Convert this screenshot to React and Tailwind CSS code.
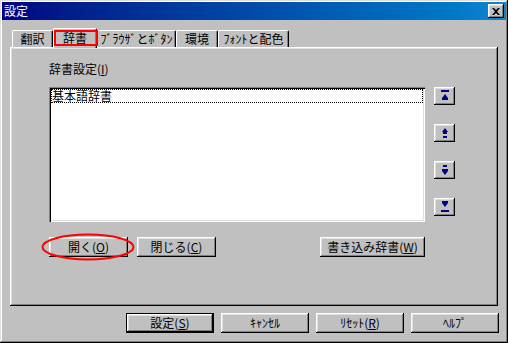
import React from 'react';

const raised =
  'shadow-[inset_-1px_-1px_0_#000,inset_1px_1px_0_#fff,inset_-2px_-2px_0_#808080,inset_2px_2px_0_#dfdfdf]';
const sunken =
  'shadow-[inset_1px_1px_0_#808080,inset_2px_2px_0_#000,inset_-1px_-1px_0_#fff,inset_-2px_-2px_0_#dfdfdf]';
const font = "font-['Noto_Sans_CJK_JP',sans-serif]";

function Btn({ children, className = '' }) {
  return (
    <div
      className={`h-[20px] flex items-center justify-center bg-[#c0c0c0] text-[12px] leading-[14px] text-black ${raised} ${className}`}
    >
      {children}
    </div>
  );
}

function Tab({ label, w, active }) {
  if (active) {
    return (
      <div
        className={`relative z-10 -mb-px h-[20px] flex items-start justify-center pt-[2px] bg-[#c0c0c0] border-t border-l border-white border-r border-r-black rounded-t-[2px] shadow-[inset_-1px_0_0_#808080] ${w}`}
      >
        <span className="text-[12px] leading-[14px]">{label}</span>
        <div className="absolute left-0 top-[1px] w-[44px] h-[16px] border-2 border-[#ff0000]" />
      </div>
    );
  }
  return (
    <div
      className={`h-[17px] flex items-start justify-center pt-[1px] border-t border-l border-white border-r border-r-black rounded-t-[2px] shadow-[inset_-1px_0_0_#808080] ${w}`}
    >
      <span className="text-[12px] leading-[14px]">{label}</span>
    </div>
  );
}

function ArrowIcon({ kind }) {
  const c = '#000080';
  return (
    <svg width="10" height="12" viewBox="0 0 10 12">
      {kind === 'top' && (
        <>
          <rect x="1" y="0" width="8" height="2" fill={c} />
          <path d="M5 4 L8 8 L2 8 Z" fill={c} />
          <rect x="2" y="8" width="6" height="2" fill={c} />
        </>
      )}
      {kind === 'up' && (
        <>
          <path d="M5 1 L8 5 L2 5 Z" fill={c} />
          <rect x="3" y="5" width="4" height="2" fill={c} />
          <rect x="3" y="9" width="4" height="2" fill={c} />
        </>
      )}
      {kind === 'down' && (
        <>
          <rect x="3" y="1" width="4" height="2" fill={c} />
          <rect x="2" y="5" width="6" height="2" fill={c} />
          <path d="M2 7 L8 7 L5 11 Z" fill={c} />
        </>
      )}
      {kind === 'bottom' && (
        <>
          <rect x="2" y="0" width="6" height="2" fill={c} />
          <path d="M2 2 L8 2 L5 6 Z" fill={c} />
          <rect x="1" y="9" width="8" height="2" fill={c} />
        </>
      )}
    </svg>
  );
}

function ArrowBtn({ kind }) {
  return (
    <div className={`w-[21px] h-[18px] flex items-center justify-center bg-[#c0c0c0] ${raised}`}>
      <ArrowIcon kind={kind} />
    </div>
  );
}

export default function App() {
  return (
    <div
      className={`w-[508px] h-[343px] bg-[#c0c0c0] p-[2px] flex flex-col text-black ${font} shadow-[inset_-1px_-1px_0_#000,inset_1px_1px_0_#dfdfdf,inset_-2px_-2px_0_#808080,inset_2px_2px_0_#fff]`}
    >
      {/* title bar */}
      <div className="h-[18px] flex items-center justify-between bg-linear-to-r from-[#000080] to-[#1084d0] pl-[2px] pr-[2px]">
        <span className="text-white text-[12px] leading-[14px]">設定</span>
        <div className={`w-[16px] h-[14px] flex items-center justify-center bg-[#c0c0c0] ${raised}`}>
          <svg width="8" height="7" viewBox="0 0 8 7">
            <path d="M0 0 L2 0 L4 2 L6 0 L8 0 L5 3.5 L8 7 L6 7 L4 5 L2 7 L0 7 L3 3.5 Z" fill="#000" />
          </svg>
        </div>
      </div>

      <div className="flex-1 flex flex-col px-[8px] pt-[8px]">
        {/* tabs */}
        <div className="flex items-end h-[19px] pl-[2px]">
          <Tab label="翻訳" w="w-[41px]" />
          <Tab label="辞書" w="w-[44px]" active />
          <Tab label="ﾌﾞﾗｳｻﾞとﾎﾞﾀﾝ" w="w-[79px]" />
          <Tab label="環境" w="w-[42px]" />
          <Tab label="ﾌｫﾝﾄと配色" w="w-[71px]" />
        </div>

        {/* panel */}
        <div className={`h-[259px] w-[488px] flex flex-col pl-[39px] pt-[15px] ${raised}`}>
          <div className="text-[12px] leading-[14px]">
            辞書設定(<span className="underline">I</span>)
          </div>

          <div className="flex mt-[11px]">
            <div className={`w-[376px] h-[135px] bg-white p-[2px] ${sunken}`}>
              <div className="h-[14px] border border-dotted border-black flex items-center text-[12px] leading-[12px]">
                基本語辞書
              </div>
            </div>
            <div className="flex flex-col gap-[19px] ml-[9px]">
              <ArrowBtn kind="top" />
              <ArrowBtn kind="up" />
              <ArrowBtn kind="down" />
              <ArrowBtn kind="bottom" />
            </div>
          </div>

          <div className="flex justify-between w-[376px] mt-[15px]">
            <div className="flex gap-[9px]">
              <div className="relative">
                <Btn className="w-[79px]">
                  開く(<span className="underline">O</span>)
                </Btn>
                <svg className="absolute left-[-8px] top-[-4px]" width="94" height="28" viewBox="0 0 94 28">
                  <ellipse cx="47" cy="14" rx="45.5" ry="12.5" fill="none" stroke="#ff0000" strokeWidth="2" />
                </svg>
              </div>
              <Btn className="w-[79px]">
                閉じる(<span className="underline">C</span>)
              </Btn>
            </div>
            <Btn className="w-[105px]">
              書き込み辞書(<span className="underline">W</span>)
            </Btn>
          </div>
        </div>

        {/* bottom buttons */}
        <div className="flex justify-end gap-[7px] mt-[7px] -mr-px">
          <div className="w-[88px] h-[20px] border border-black">
            <Btn className="w-full h-full">
              設定(<span className="underline">S</span>)
            </Btn>
          </div>
          <Btn className="w-[88px]">ｷｬﾝｾﾙ</Btn>
          <Btn className="w-[88px]">
            ﾘｾｯﾄ(<span className="underline">R</span>)
          </Btn>
          <Btn className="w-[88px]">ﾍﾙﾌﾟ</Btn>
        </div>
      </div>
    </div>
  );
}
